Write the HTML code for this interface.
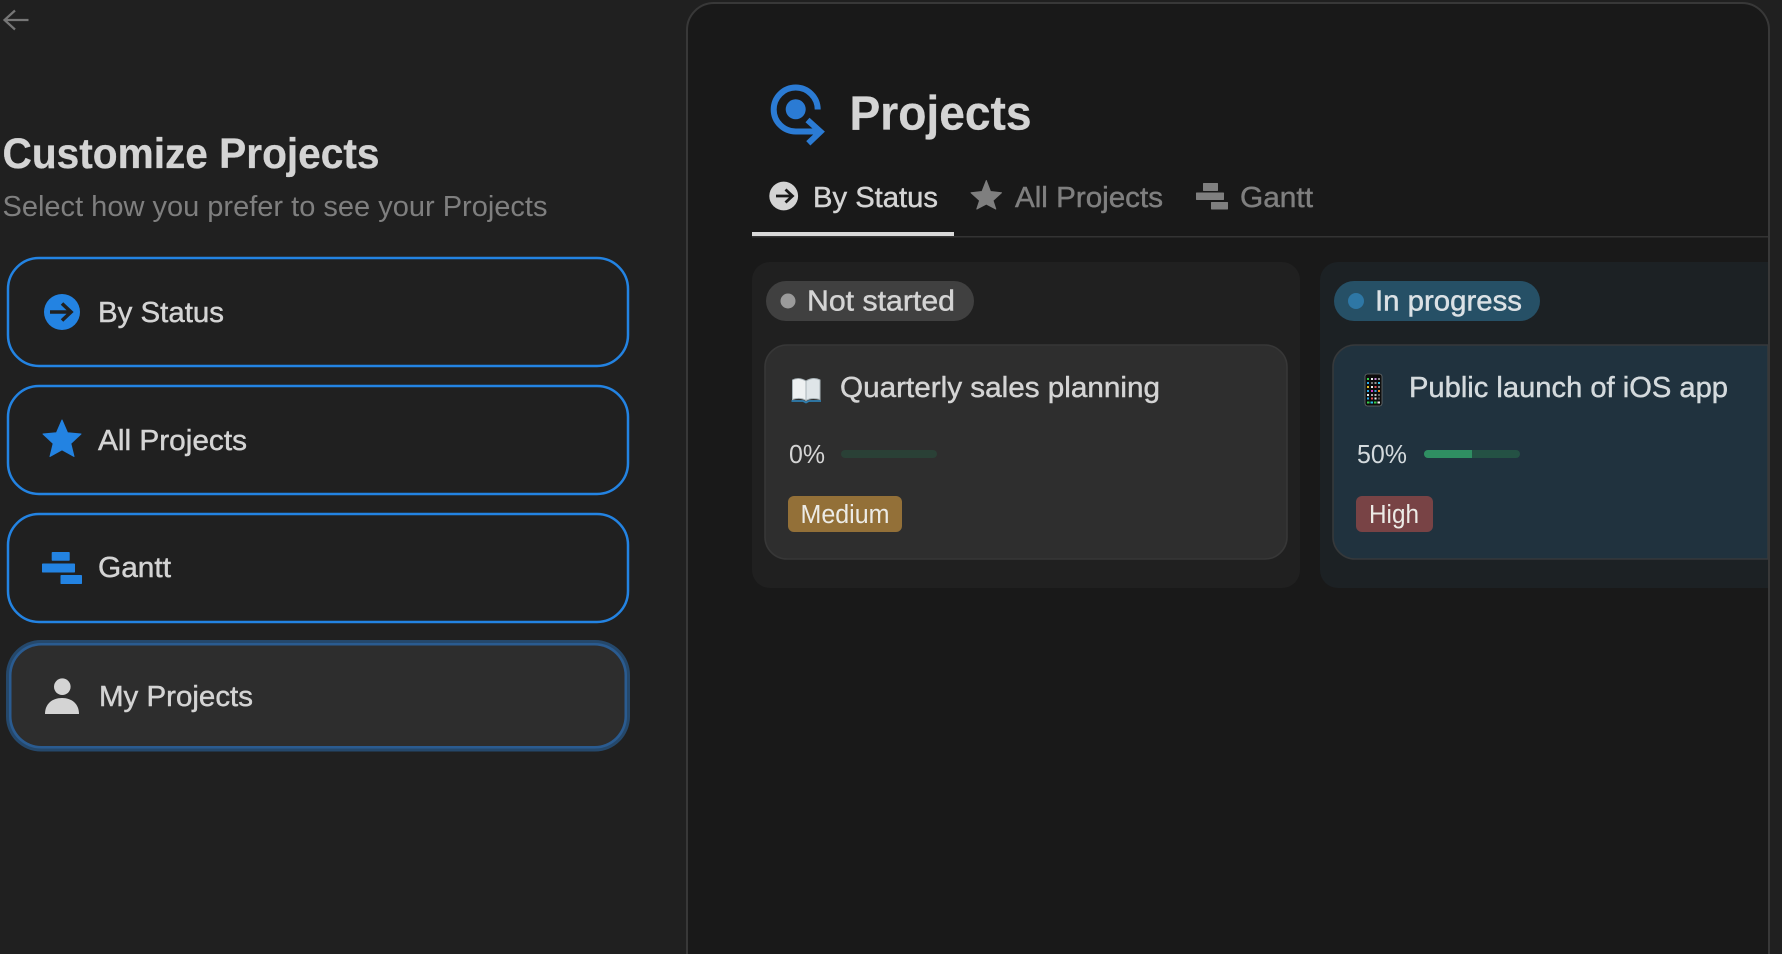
<!DOCTYPE html>
<html><head><meta charset="utf-8"><title>Customize Projects</title>
<style>
html,body{margin:0;padding:0;background:#202020;width:1782px;height:954px;overflow:hidden}
svg{display:block}
text{font-family:"Liberation Sans",sans-serif;fill:#d4d4d4}
.m{stroke:#d4d4d4;stroke-width:.45px}
.g{fill:#7f7f7f;stroke:#7f7f7f;stroke-width:.45px}
</style></head><body>
<svg xmlns="http://www.w3.org/2000/svg" width="1782" height="954" viewBox="0 0 1782 954">
<rect width="1782" height="954" fill="#202020"/>
<!-- back -->
<path d="M28.500 20H5M15 10.500L4.500 20L15 29.500" fill="none" stroke="#767676" stroke-width="2.200"/>
<text x="2.500" y="168" font-size="43" font-weight="700" style="stroke:#d4d4d4;stroke-width:.3px" textLength="377" lengthAdjust="spacingAndGlyphs">Customize Projects</text>
<text x="2.500" y="216" font-size="28.500" style="fill:#7f7f7f" textLength="545" lengthAdjust="spacingAndGlyphs">Select how you prefer to see your Projects</text>

<!-- option cards -->
<rect x="8" y="258" width="620" height="108" rx="31" fill="none" stroke="#2383e2" stroke-width="2.500"/>
<rect x="8" y="386" width="620" height="108" rx="31" fill="none" stroke="#2383e2" stroke-width="2.500"/>
<rect x="8" y="514" width="620" height="108" rx="31" fill="none" stroke="#2383e2" stroke-width="2.500"/>
<rect x="6" y="640" width="624" height="111.500" rx="35" fill="#25486b"/>
<rect x="9" y="643" width="618" height="105.500" rx="32" fill="#2a5b90"/>
<rect x="11.500" y="645.500" width="613" height="100.500" rx="30" fill="#2d2d2d"/>

<circle cx="62" cy="312" r="18" fill="#2383e2"/>
<path d="M50 312H71M62 303.500L71 312L62 320.500" fill="none" stroke="#202020" stroke-width="3.600"/>
<text class="m" x="98" y="322" font-size="29" textLength="126" lengthAdjust="spacingAndGlyphs">By Status</text>

<path d="M62 420L67.500 432.700L81 434L70.800 443.500L74 456.500L62 449.800L50 456.500L53.200 443.500L43 434L56.500 432.700Z" fill="#2383e2" stroke="#2383e2" stroke-width="1" stroke-linejoin="round"/>
<text class="m" x="98" y="450" font-size="29" textLength="149" lengthAdjust="spacingAndGlyphs">All Projects</text>

<g fill="#2383e2"><rect x="51.700" y="552" width="18" height="8.800" rx=".8"/><rect x="42" y="563.500" width="33" height="9" rx=".8"/><rect x="60.500" y="575" width="21.500" height="9" rx=".8"/></g>
<text class="m" x="98" y="577" font-size="29" textLength="73" lengthAdjust="spacingAndGlyphs">Gantt</text>

<circle cx="62.300" cy="686.700" r="8.300" fill="#d4d4d4"/>
<path d="M45 714C45 704 52 698 62 698C72 698 79 704 79 714Z" fill="#d4d4d4"/>
<text class="m" x="99" y="706" font-size="29" textLength="154" lengthAdjust="spacingAndGlyphs">My Projects</text>

<!-- right panel -->
<path d="M687 960V30A27 27 0 0 1 714 3H1742A27 27 0 0 1 1769 30V960Z" fill="#191919" stroke="#383838" stroke-width="2"/>

<!-- header icon -->
<path d="M817.700 109.500A22 22 0 1 0 795.700 131.500H820" fill="none" stroke="#2b7bd4" stroke-width="6"/>
<path d="M807.500 120L820.500 131.700L808.300 143.300" fill="none" stroke="#2b7bd4" stroke-width="6"/>
<circle cx="795.700" cy="109.300" r="10" fill="#2b7bd4"/>
<text x="849.500" y="129.500" font-size="48.500" font-weight="700" style="stroke:#d4d4d4;stroke-width:.3px" textLength="182" lengthAdjust="spacingAndGlyphs">Projects</text>

<!-- tabs -->
<circle cx="783.700" cy="196" r="14.400" fill="#d4d4d4"/>
<path d="M776 196H792M785.500 189.500L792.500 196L785.500 202.500" fill="none" stroke="#191919" stroke-width="2.800"/>
<text class="m" x="813" y="207" font-size="29" textLength="125" lengthAdjust="spacingAndGlyphs">By Status</text>

<path d="M986.300 180.500L990.500 191.500L1001.500 192.800L993 200.500L995.800 209L986.300 204L976.800 209L979.600 200.500L971 192.800L982 191.500Z" fill="#7f7f7f" stroke="#7f7f7f" stroke-width="1" stroke-linejoin="round"/>
<text class="g" x="1015" y="207" font-size="29" textLength="148" lengthAdjust="spacingAndGlyphs">All Projects</text>

<g fill="#7f7f7f"><rect x="1203" y="183" width="15" height="8" rx=".6"/><rect x="1196" y="192.500" width="28" height="7.500" rx=".6"/><rect x="1211" y="202" width="17" height="7.500" rx=".6"/></g>
<text class="g" x="1240" y="207" font-size="29" textLength="73" lengthAdjust="spacingAndGlyphs">Gantt</text>

<rect x="752" y="236" width="1016" height="1.500" fill="#333"/>
<rect x="752" y="232" width="202" height="4" fill="#d9d9d9"/>

<!-- column 1 -->
<rect x="752" y="262" width="548" height="326" rx="18" fill="#202020"/>
<rect x="766" y="281" width="208" height="40" rx="20" fill="#404040"/>
<circle cx="788" cy="301" r="7.500" fill="#9b9b9b"/>
<text class="m" x="807" y="310.500" font-size="29" textLength="148" lengthAdjust="spacingAndGlyphs">Not started</text>

<rect x="765" y="345" width="522" height="214" rx="22" fill="#2e2e2e" stroke="#373737" stroke-width="1.600"/>
<!-- book -->
<path d="M806 381C801 378 796 378 792.500 380V399.500C797 398 802 398 806 400.500Z" fill="#eef1f2" stroke="#aab4b8"/>
<path d="M806 381C811 378 816 378 820 380V399.500C815 398 810 398 806 400.500Z" fill="#dfe5e8" stroke="#aab4b8"/>
<path d="M791.500 401H803L806 402.500L809 401H821" fill="none" stroke="#2f7fb0" stroke-width="1.800"/>
<text class="m" x="840" y="397" font-size="29" textLength="320" lengthAdjust="spacingAndGlyphs">Quarterly sales planning</text>
<text x="789" y="463" font-size="25.500" textLength="36" lengthAdjust="spacingAndGlyphs">0%</text>
<rect x="841" y="450" width="96" height="8" rx="4" fill="#2a4036"/>
<rect x="788" y="496" width="114" height="36" rx="6" fill="#937038"/>
<text x="800.500" y="523" font-size="25.500" style="fill:#ecebe6" textLength="89" lengthAdjust="spacingAndGlyphs">Medium</text>

<!-- column 2 -->
<path d="M1768 262H1338A18 18 0 0 0 1320 280V570A18 18 0 0 0 1338 588H1768Z" fill="#1c2124"/>
<rect x="1334" y="281" width="206" height="40" rx="20" fill="#265066"/>
<circle cx="1356" cy="301" r="8" fill="#2e77a5"/>
<text class="m" x="1375" y="310.500" font-size="29" style="fill:#dbe1e5;stroke:#dbe1e5" textLength="147" lengthAdjust="spacingAndGlyphs">In progress</text>

<path d="M1768 345H1355A22 22 0 0 0 1333 367V537A22 22 0 0 0 1355 559H1768Z" fill="#20323e" stroke="#36393b" stroke-width="1.600"/>
<!-- phone -->
<rect x="1365" y="374" width="17" height="32" rx="2.500" fill="#0d0d0d" stroke="#6a6e70" stroke-width=".800"/>
<g>
<rect x="1367" y="378" width="2" height="2" fill="#35d04a"/><rect x="1371" y="378" width="2" height="2" fill="#f0f0f0"/><rect x="1374.500" y="378" width="2" height="2" fill="#c98bdc"/><rect x="1378" y="378" width="2" height="2" fill="#8f8f8f"/>
<rect x="1367" y="382" width="2" height="2" fill="#2aa9e8"/><rect x="1371" y="382" width="2" height="2" fill="#777"/><rect x="1374.500" y="382" width="2" height="2" fill="#999"/><rect x="1378" y="382" width="2" height="2" fill="#2ac0e8"/>
<rect x="1367" y="386" width="2" height="2" fill="#e4c12a"/><rect x="1371" y="386" width="2" height="2" fill="#eee"/><rect x="1374.500" y="386" width="2" height="2" fill="#e25050"/><rect x="1378" y="386" width="2" height="2" fill="#888"/>
<rect x="1367" y="390" width="2" height="2" fill="#2aa9e8"/><rect x="1371" y="390" width="2" height="2" fill="#d03ac0"/><rect x="1374.500" y="390" width="2" height="2" fill="#35a0e0"/><rect x="1378" y="390" width="2" height="2" fill="#f09020"/>
<rect x="1367" y="394" width="2" height="2" fill="#eee"/><rect x="1371" y="394" width="2" height="2" fill="#aaa"/><rect x="1374.500" y="394" width="2" height="2" fill="#bbb"/><rect x="1378" y="394" width="2" height="2" fill="#666"/>
<rect x="1367" y="397.500" width="2" height="2" fill="#2aa9e8"/><rect x="1371" y="397.500" width="2" height="2" fill="#e25050"/><rect x="1374.500" y="397.500" width="2" height="2" fill="#eee"/><rect x="1378" y="397.500" width="2" height="2" fill="#555"/>
<rect x="1367" y="401.500" width="2.500" height="2" fill="#35d04a"/><rect x="1370.500" y="401.500" width="2.500" height="2" fill="#2ac0e8"/><rect x="1374" y="401.500" width="2.500" height="2" fill="#35d04a"/><rect x="1377.500" y="401.500" width="2.500" height="2" fill="#eee"/>
</g>
<text class="m" x="1409" y="397" font-size="29" style="fill:#d4dadd;stroke:#d4dadd" textLength="319" lengthAdjust="spacingAndGlyphs">Public launch of iOS app</text>
<text x="1357" y="463" font-size="25.500" style="fill:#d4dadd" textLength="50" lengthAdjust="spacingAndGlyphs">50%</text>
<rect x="1424" y="450" width="96" height="8" rx="4" fill="#245144"/>
<path d="M1428 450H1472V458H1428A4 4 0 0 1 1428 450Z" fill="#2f8e62"/>
<rect x="1356" y="496" width="77" height="36" rx="6" fill="#784345"/>
<text x="1369" y="523" font-size="25.500" style="fill:#ecebe6" textLength="50" lengthAdjust="spacingAndGlyphs">High</text>

<!-- panel edge over content -->
<rect x="1768" y="30" width="2" height="930" fill="#383838"/>
</svg>
</body></html>
